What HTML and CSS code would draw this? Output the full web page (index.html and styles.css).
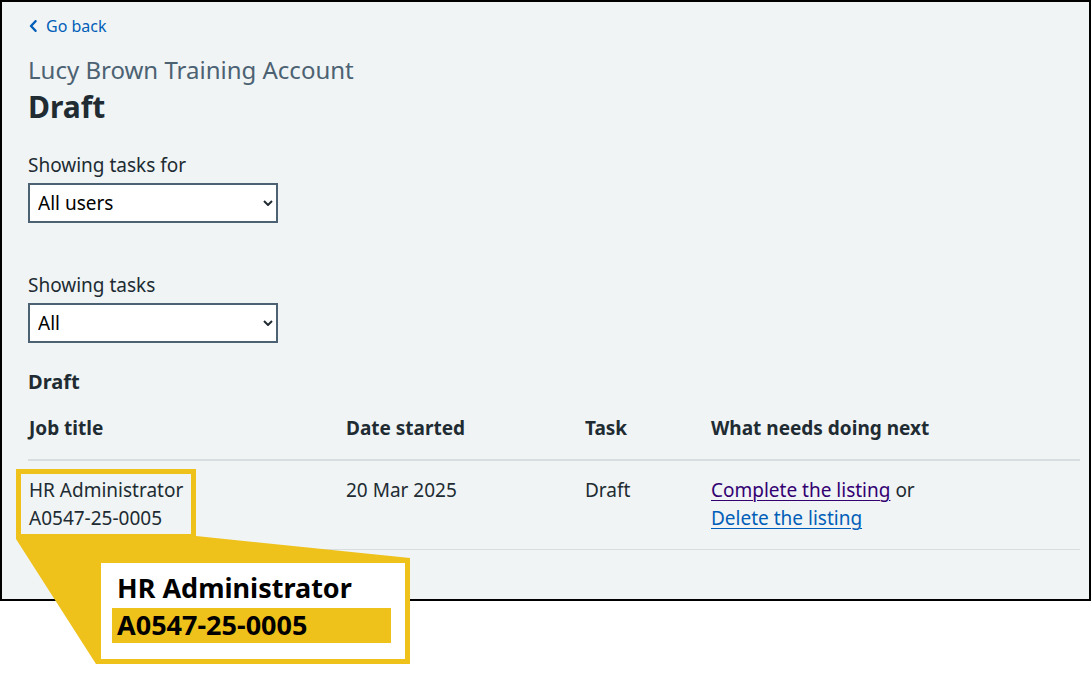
FILE: index.html
```html
<!DOCTYPE html>
<html lang="en">
<head>
<meta charset="utf-8">
<title>Draft tasks</title>
<link rel="stylesheet" href="styles.css">
</head>
<body>
<div class="canvas">
  <div class="screen">
    <a class="back-link" href="#">
      <svg class="back-icon" width="8" height="12" viewBox="0 0 8 12" aria-hidden="true"><path d="M6.5 1.2 L2 6 L6.5 10.8" fill="none" stroke="#005eb8" stroke-width="2.4" stroke-linecap="round" stroke-linejoin="round"/></svg>
      <span>Go back</span>
    </a>
    <div class="caption">Lucy Brown Training Account</div>
    <h1 class="title">Draft</h1>

    <div class="field">
      <label class="label">Showing tasks for</label>
      <div class="select-wrap">
        <select class="select"><option>All users</option></select>
        <svg class="select-arrow" width="10" height="6" viewBox="0 0 10 6" aria-hidden="true"><path d="M1 1 L5 5 L9 1" fill="none" stroke="#212b32" stroke-width="2"/></svg>
      </div>
    </div>

    <div class="field field-second">
      <label class="label">Showing tasks</label>
      <div class="select-wrap">
        <select class="select"><option>All</option></select>
        <svg class="select-arrow" width="10" height="6" viewBox="0 0 10 6" aria-hidden="true"><path d="M1 1 L5 5 L9 1" fill="none" stroke="#212b32" stroke-width="2"/></svg>
      </div>
    </div>

    <h2 class="section-title">Draft</h2>
    <table class="table">
      <colgroup>
        <col class="c1"><col class="c2"><col class="c3"><col class="c4">
      </colgroup>
      <thead>
        <tr><th>Job title</th><th>Date started</th><th>Task</th><th>What needs doing next</th></tr>
      </thead>
      <tbody>
        <tr>
          <td>HR Administrator<br>A0547-25-0005</td>
          <td>20 Mar 2025</td>
          <td>Draft</td>
          <td><a class="link visited" href="#">Complete the listing</a> or<br><a class="link" href="#">Delete the listing</a></td>
        </tr>
      </tbody>
    </table>
  </div>

  <div class="annotation">
    <svg class="annotation-shape" width="1091" height="696" viewBox="0 0 1091 696" aria-hidden="true">
      <path fill="#efc11b" fill-rule="evenodd" d="M16 469 H196 V536 L410 558 V664 H96 L16 539 Z M21 474 V534 H191 V474 Z"/>
      <rect x="101" y="563" width="304" height="96" fill="#ffffff"/>
    </svg>
    <div class="zoom-box">
      <div class="zoom-title">HR Administrator</div>
      <div class="zoom-ref">A0547-25-0005</div>
    </div>
  </div>
</div>
</body>
</html>
```

FILE: styles.css
```css
html, body {
  margin: 0;
  padding: 0;
  background: #ffffff;
}

body {
  font-family: "Noto Sans", "Open Sans", sans-serif;
  color: #212b32;
}

.canvas {
  position: relative;
  width: 1091px;
  height: 696px;
}

.screen {
  box-sizing: border-box;
  width: 1091px;
  height: 601px;
  border: 2px solid #000000;
  background: #f0f4f5;
  padding: 12px 9px 0 26px;
}

.back-link {
  display: flex;
  align-items: center;
  gap: 9px;
  width: max-content;
  font-size: 16px;
  line-height: 24px;
  color: #005eb8;
  text-decoration: none;
}

.back-icon {
  display: block;
  margin-left: 1px;
}

.caption {
  margin-top: 16px;
  font-size: 24px;
  line-height: 32px;
  color: #4c6272;
}

.title {
  margin: 3px 0 0;
  font-size: 30px;
  line-height: 36px;
  font-weight: 700;
}

.field {
  margin-top: 26px;
}

.field-second {
  margin-top: 48px;
}

.label {
  display: block;
  font-size: 19px;
  line-height: 28px;
}

.select-wrap {
  position: relative;
  margin-top: 4px;
  width: 250px;
}

.select {
  display: block;
  box-sizing: border-box;
  width: 250px;
  height: 40px;
  margin: 0;
  border: 2px solid #4c6272;
  border-radius: 0;
  background: #ffffff;
  padding: 0 30px 0 8px;
  font-family: "Noto Sans", "Open Sans", sans-serif;
  font-size: 19px;
  color: #000000;
  appearance: none;
  -webkit-appearance: none;
}

.select-arrow {
  position: absolute;
  right: 5px;
  top: 17px;
}

.section-title {
  margin: 25px 0 0;
  font-size: 20px;
  line-height: 28px;
  font-weight: 700;
}

.table {
  width: 1052px;
  border-collapse: collapse;
  table-layout: fixed;
  font-size: 19px;
  line-height: 28px;
}

.c1 { width: 317px; }
.c2 { width: 239px; }
.c3 { width: 126px; }
.c4 { width: 370px; }

.table th {
  text-align: left;
  font-weight: 700;
  padding: 18px 0 17px 1px;
  border-bottom: 2px solid #d8dde0;
}

.table td {
  vertical-align: top;
  padding: 15px 0 17px 1px;
  border-bottom: 1px solid #d8dde0;
}

.link {
  color: #005eb8;
  text-decoration: underline;
  text-decoration-thickness: 1px;
  text-underline-offset: 3px;
}

.link.visited {
  color: #330072;
}

.annotation {
  position: absolute;
  left: 0;
  top: 0;
  width: 1091px;
  height: 696px;
  pointer-events: none;
}

.annotation-shape {
  position: absolute;
  left: 0;
  top: 0;
}

.zoom-box {
  position: absolute;
  left: 101px;
  top: 563px;
  width: 304px;
  height: 96px;
  box-sizing: border-box;
  padding: 8px 14px 0 11px;
  font-size: 27px;
  font-weight: 700;
  color: #000000;
}

.zoom-title {
  padding-left: 5px;
  line-height: 34px;
}

.zoom-ref {
  margin-top: 3px;
  height: 35px;
  line-height: 34px;
  padding-left: 5px;
  background: #efc11b;
}
```
